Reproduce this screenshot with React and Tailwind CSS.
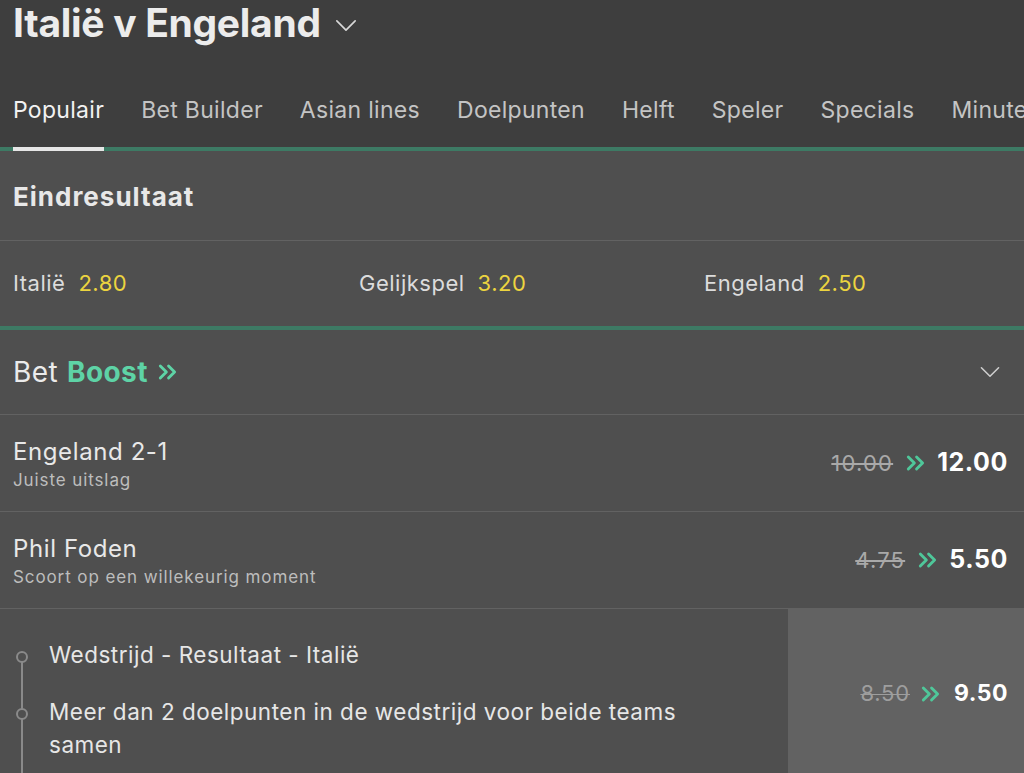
import React from 'react';

const tabs = ['Populair', 'Bet Builder', 'Asian lines', 'Doelpunten', 'Helft', 'Speler', 'Specials', 'Minuten'];

function DoubleChevron({ className = '' }) {
    return (
        <svg viewBox="0 0 20 16" className={className} fill="none" stroke="currentColor" strokeWidth="2.6" strokeLinecap="round" strokeLinejoin="round">
            <path d="M3 2.5 L8.5 8 L3 13.5" />
            <path d="M10.5 2.5 L16 8 L10.5 13.5" />
        </svg>
    );
}

function ChevronDown({ className = '' }) {
    return (
        <svg viewBox="0 0 24 14" className={className} fill="none" stroke="currentColor" strokeWidth="1.8" strokeLinecap="round" strokeLinejoin="round">
            <path d="M2 2 L12 12 L22 2" />
        </svg>
    );
}

function BoostOdds({ from, to }) {
    return (
        <div className="flex items-center">
            <span className="text-[22px] tracking-[1.2px] text-[#a9a9a9] line-through decoration-[1.5px]">{from}</span>
            <DoubleChevron className="w-[22px] h-[18px] ml-[12px] mr-[10px] text-[#4fc79a]" />
            <span className="text-[25px] tracking-[0.6px] font-bold text-white">{to}</span>
        </div>
    );
}

function BoostRow({ title, sub, from, to }) {
    return (
        <div className="h-[97px] border-b border-[#626262] flex items-center justify-between pl-[13px] pr-[16px]">
            <div className="flex flex-col">
                <span className="text-[24px] tracking-[0.6px] text-[#e8e8e8] leading-[30px]">{title}</span>
                <span className="text-[17px] tracking-[0.9px] text-[#bdbdbd] leading-[20px] mt-[3px]">{sub}</span>
            </div>
            <BoostOdds from={from} to={to} />
        </div>
    );
}

export default function App() {
    return (
        <div className="w-[1024px] h-[773px] overflow-hidden bg-[#4f4f4f] text-white" style={{ fontFamily: 'Inter, "Noto Sans", sans-serif' }}>
            {/* Header */}
            <div className="bg-[#3e3e3e]">
                <div className="flex items-center h-[48px] pl-[13px]">
                    <h1 className="text-[39px] font-bold text-[#ececec] tracking-[-0.3px] leading-none -mt-[4px]">Italië v Engeland</h1>
                    <ChevronDown className="w-[22px] h-[13px] ml-[14px] mt-[2px] text-[#d8d8d8]" />
                </div>
                <div className="flex gap-[37px] pl-[13px] pt-[26px] h-[99px] items-center whitespace-nowrap overflow-hidden">
                    {tabs.map((t, i) => (
                        <span key={t} className={`text-[23px] tracking-[0.3px] ${i === 0 ? 'text-[#f2f2f2]' : 'text-[#c4c4c4]'}`}>{t}</span>
                    ))}
                </div>
                <div className="h-[4px] bg-[#3d7a64] relative">
                    <div className="absolute left-[13px] top-0 h-[4px] w-[91px] bg-[#e6e6e6]" />
                </div>
            </div>

            {/* Eindresultaat */}
            <div className="h-[90px] border-b border-[#626262] flex items-center pl-[13px] pt-[2px]">
                <span className="text-[26px] tracking-[1px] font-bold text-[#e8e8e8]">Eindresultaat</span>
            </div>
            <div className="h-[85px] grid grid-cols-[346px_345px_1fr] items-center pl-[13px]">
                <div className="text-[22px] tracking-[0.5px]"><span className="text-[#dcdcdc]">Italië</span><span className="ml-[13px] text-[#ecd43f]">2.80</span></div>
                <div className="text-[22px] tracking-[0.5px]"><span className="text-[#dcdcdc]">Gelijkspel</span><span className="ml-[13px] text-[#ecd43f]">3.20</span></div>
                <div className="text-[22px] tracking-[0.5px]"><span className="text-[#dcdcdc]">Engeland</span><span className="ml-[13px] text-[#ecd43f]">2.50</span></div>
            </div>
            <div className="h-[4px] bg-[#3d7a64]" />

            {/* Bet Boost */}
            <div className="h-[85px] border-b border-[#626262] flex items-center justify-between pl-[13px] pr-[23px]">
                <div className="flex items-center text-[28px] tracking-[0.4px]">
                    <span className="text-[#ebebeb]">Bet</span>
                    <span className="ml-[9px] font-bold text-[#5ed3a6]">Boost</span>
                    <DoubleChevron className="w-[22px] h-[20px] ml-[9px] text-[#5ed3a6]" />
                </div>
                <ChevronDown className="w-[22px] h-[12px] text-[#cfcfcf]" />
            </div>

            <BoostRow title="Engeland 2-1" sub="Juiste uitslag" from="10.00" to="12.00" />
            <BoostRow title="Phil Foden" sub="Scoort op een willekeurig moment" from="4.75" to="5.50" />

            {/* Combined boost */}
            <div className="flex h-[170px]">
                <div className="flex-1 relative pl-[49px] pr-[40px] pt-[29px]">
                    <div className="absolute left-[21px] top-[53px] bottom-0 w-[2px] bg-[#8a8a8a]" />
                    <div className="absolute left-[16px] top-[42px] w-[12px] h-[12px] rounded-full border-2 border-[#8a8a8a] bg-[#4f4f4f]" />
                    <div className="absolute left-[16px] top-[99px] w-[12px] h-[12px] rounded-full border-2 border-[#8a8a8a] bg-[#4f4f4f]" />
                    <p className="text-[22.5px] tracking-[0.5px] leading-[33px] text-[#e6e6e6]">Wedstrijd - Resultaat - Italië</p>
                    <p className="text-[22.5px] tracking-[0.5px] leading-[33px] text-[#e6e6e6] mt-[24px]">Meer dan 2 doelpunten in de wedstrijd voor beide teams samen</p>
                </div>
                <div className="w-[236px] bg-[#626262] flex items-center justify-end pr-[16px] pb-[1px]">
                    <div className="flex items-center">
                        <span className="text-[22px] tracking-[0.8px] text-[#9e9e9e] line-through decoration-[1px]">8.50</span>
                        <DoubleChevron className="w-[22px] h-[18px] ml-[10px] mr-[12px] text-[#4fc79a]" />
                        <span className="text-[23px] tracking-[0.5px] font-bold text-white">9.50</span>
                    </div>
                </div>
            </div>
        </div>
    );
}
